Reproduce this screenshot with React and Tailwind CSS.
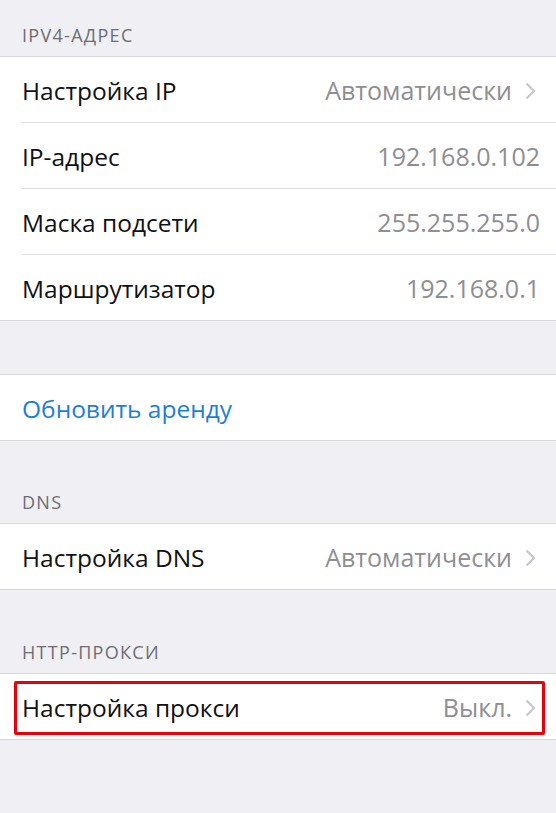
const Chevron = () => (
  <svg width="11" height="18" viewBox="0 0 11 18" className="ml-[13px] mr-[4px] shrink-0">
    <path d="M1.5 1.5l7.5 7.5-7.5 7.5" fill="none" stroke="#c7c7cc" strokeWidth="2.2" />
  </svg>
);

const Row = ({ label, value, chevron, last, blue, boxed }) => (
  <div className="relative h-[66px] pl-[22px] bg-white">
    <div className={`h-full flex items-center pr-[16px] pt-[3px] ${last ? 'border-b border-[#d8d8dc] -ml-[22px] pl-[22px]' : 'border-b border-[#dedee2]'}`}>
      <span className={`text-[24.5px] ${blue ? 'text-[#1d7fd4]' : 'text-[#111]'}`}>{label}</span>
      <span className="ml-auto text-[25px] text-[#8e8e93]">{value}</span>
      {chevron && <Chevron />}
    </div>
    {boxed && (
      <div className="absolute left-[14px] right-[11px] top-[7px] bottom-[5px] border-[3px] border-[#e8000b] rounded-[2px]" />
    )}
  </div>
);

const Group = ({ children }) => (
  <div className="border-t border-[#d8d8dc]">{children}</div>
);

const Header = ({ children, h }) => (
  <div className={`${h} flex items-end pl-[22px] pb-[7px] text-[18px] text-[#6d6d72] tracking-[1.3px]`}>
    {children}
  </div>
);

export default function App() {
  return (
    <div className="min-h-[813px] bg-[#efeff4]" style={{ fontFamily: '"Open Sans", "Noto Sans", sans-serif' }}>
      <Header h="h-[56px]">IPV4-АДРЕС</Header>
      <Group>
        <Row label="Настройка IP" value="Автоматически" chevron />
        <Row label="IP-адрес" value="192.168.0.102" />
        <Row label="Маска подсети" value="255.255.255.0" />
        <Row label="Маршрутизатор" value="192.168.0.1" last />
      </Group>
      <div className="h-[53px]" />
      <Group>
        <Row label="Обновить аренду" blue last />
      </Group>
      <Header h="h-[82px]">DNS</Header>
      <Group>
        <Row label="Настройка DNS" value="Автоматически" chevron last />
      </Group>
      <Header h="h-[83px]">HTTP-ПРОКСИ</Header>
      <Group>
        <Row label="Настройка прокси" value="Выкл." chevron last boxed />
      </Group>
    </div>
  );
}
